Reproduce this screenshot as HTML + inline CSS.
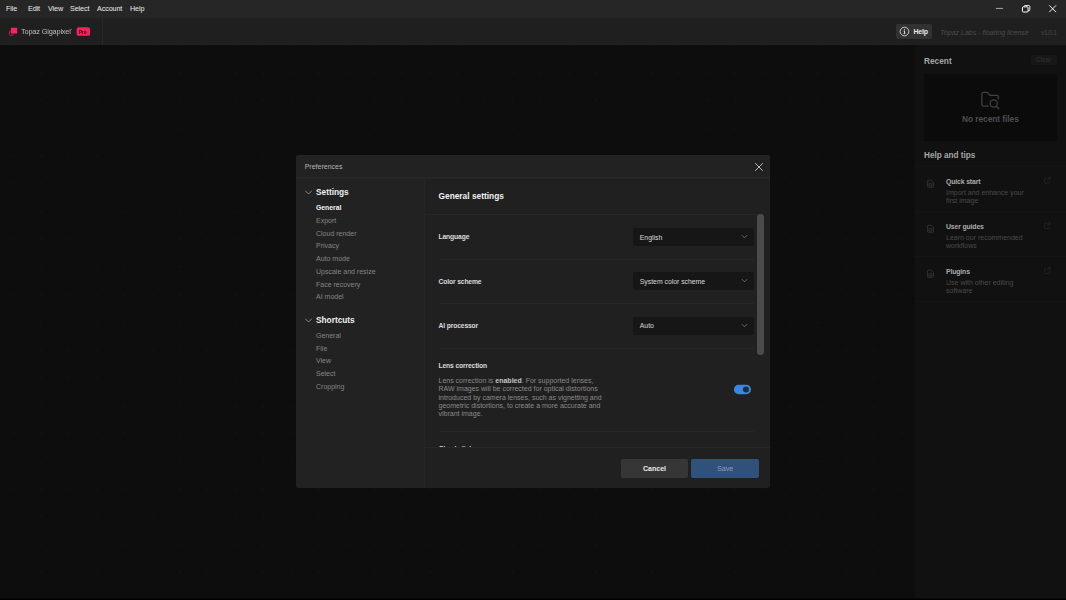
<!DOCTYPE html>
<html lang="en">
<head>
<meta charset="utf-8">
<title>Topaz Gigapixel - Preferences</title>
<style>
*{box-sizing:border-box;margin:0;padding:0}
html,body{width:1066px;height:600px;overflow:hidden;background:#0d0d0d}
body{font-family:"Liberation Sans",sans-serif;color:#e6e6e6;position:relative;font-size:7px}
.t{position:absolute;white-space:nowrap;line-height:10px;height:10px}
.b{font-weight:bold}
#menubar{position:absolute;left:0;top:0;width:1066px;height:18px;background:#262626}
#menubar .t{top:3.5px;font-size:7.2px;letter-spacing:-0.1px;color:#ededed}
#toolbar{position:absolute;left:0;top:18px;width:1066px;height:27px;background:#1f1f1f}
#toolbar .sep{position:absolute;left:102px;top:0;width:1px;height:27px;background:#272727}
#helpbtn{position:absolute;left:896px;top:6px;width:36px;height:15px;background:#323232;border-radius:2px}
#main{position:absolute;left:0;top:45px;width:915px;height:555px;background-color:#0d0d0d;background-image:radial-gradient(circle at center,#161616 0.3px,rgba(22,22,22,0) 0.95px);background-size:27.76px 27.76px;background-position:27.34px 13.96px}
#bbar{position:absolute;left:0;top:598px;width:1066px;height:2px;background:linear-gradient(rgba(0,0,0,0.45) 0,rgba(0,0,0,0.45) 1px,#000 1px,#000 2px);z-index:5}
#rpanel{position:absolute;left:915px;top:45px;width:151px;height:555px;background:#111111}
#rcard{position:absolute;left:9px;top:29px;width:133px;height:67px;background:#0b0b0b;border-radius:1px}
#clear{position:absolute;left:116px;top:9.5px;width:26px;height:10.5px;background:#171717;border-radius:1.5px}
.item{position:absolute;left:0;width:151px;height:45px;border-top:1px solid #141414}
.item .ttl{left:31px;top:10px;font-size:6.9px;letter-spacing:-0.15px;font-weight:bold;color:#acacac}
.item .d1{left:31px;top:20.5px;font-size:7px;color:#4a4a4a}
.item .d2{left:31px;top:28.8px;font-size:7px;color:#4a4a4a}
#dialog{position:absolute;left:296px;top:155px;width:474px;height:333px;background:#202020;border-radius:3px;overflow:hidden}
#dhead{position:absolute;left:0;top:0;width:474px;height:24px;background:linear-gradient(#222222 0,#222222 22px,#262626 22px,#272727 24px);z-index:2}
#side{position:absolute;left:0;top:23px;width:129px;height:310px;background:#222222;border-right:1px solid #252525}
#side .t{left:20px;font-size:7px;color:#868686}
#side .h{font-size:8.3px;font-weight:bold;color:#f0f0f0}
#content{position:absolute;left:129px;top:23px;width:345px;height:269px;overflow:hidden}
.lbl{left:13.5px;font-size:6.75px;letter-spacing:-0.14px;font-weight:bold;color:#dcdcdc}
.hr{position:absolute;left:13.5px;width:315px;height:1px;background:#272727}
.sel{position:absolute;left:208px;width:121px;height:18px;background:#161616;border-radius:2px}
.sel .t{left:6.8px;top:4.5px;font-size:6.9px;letter-spacing:-0.03px;color:#dadada}
.sel svg{position:absolute;left:108px;top:6px}
#foot{position:absolute;left:129px;top:292px;width:345px;height:41px;border-top:1px solid #272727;background:#202020}
.btn{position:absolute;top:11px;height:19px;border-radius:2px;text-align:center;font-size:7.2px;line-height:19px}
</style>
</head>
<body>
<div id="menubar">
<span class="t" style="left:6px">File</span>
<span class="t" style="left:28px">Edit</span>
<span class="t" style="left:48px">View</span>
<span class="t" style="left:70px">Select</span>
<span class="t" style="left:97px">Account</span>
<span class="t" style="left:130px">Help</span>
<svg style="position:absolute;left:990px;top:0" width="76" height="18" viewBox="0 0 76 18" fill="none" stroke="#ffffff" stroke-width="1">
<path d="M5.9 8.4H13.1" stroke-width="0.7" stroke="#e0e0e0"/>
<rect x="32.45" y="6.85" width="5.6" height="5.15" rx="0.9" stroke-width="1"/>
<path d="M34.2 6.8V6.5Q34.2 5.5 35.2 5.5H38.8Q39.8 5.5 39.8 6.5V9.8Q39.8 10.8 38.8 10.8H38.1" stroke-width="0.9"/>
<path d="M59.3 5.4L66 12.1M66 5.4L59.3 12.1" stroke-width="0.95"/>
</svg>
</div>
<div id="toolbar">
<div class="sep"></div>
<svg style="position:absolute;left:7px;top:8px" width="12" height="11" viewBox="0 0 12 11">
<rect x="3.8" y="1.7" width="6.4" height="5.8" rx="0.5" fill="#fb2359"/>
<path d="M3.7 5.4H2.9Q2.4 5.4 2.4 5.9V8.6Q2.4 9.3 3.1 9.3H5.3Q6 9.3 6 8.6V7.6" fill="none" stroke="#d81f50" stroke-width="0.8"/>
</svg>
<span class="t" style="left:20.9px;top:9px;font-size:7.4px;color:#bebebe;letter-spacing:-0.19px;will-change:transform">Topaz Gigapixel<span style="font-size:4px;vertical-align:top;position:relative;top:-1px">"</span></span>
<svg style="position:absolute;left:75px;top:8px" width="17" height="12" viewBox="0 0 17 12"><rect x="1.6" y="1.25" width="13.45" height="8.6" rx="1.9" fill="#f6235b"/></svg>
<span class="t b" style="left:79.2px;top:9.6px;font-size:4.7px;letter-spacing:-0.1px;will-change:transform;color:#2a0611">Pro</span>
<div id="helpbtn">
<svg style="position:absolute;left:3px;top:2px" width="12" height="12" viewBox="0 0 12 12"><circle cx="5.5" cy="5.5" r="4.3" fill="none" stroke="#e4e4e4" stroke-width="0.85"/><rect x="5" y="3.2" width="1" height="1" fill="#e4e4e4"/><rect x="5.05" y="4.8" width="0.95" height="2.9" fill="#e4e4e4"/><rect x="4.5" y="4.8" width="1" height="0.6" fill="#e4e4e4"/><rect x="4.4" y="7.2" width="2.2" height="0.6" fill="#e4e4e4"/></svg>
<span class="t b" style="left:17.5px;top:2.5px;font-size:7px;color:#e8e8e8;letter-spacing:-0.2px">Help</span>
</div>
<span class="t" style="left:940.3px;top:9.5px;font-size:7px;font-style:italic;color:#4c4c4c">Topaz Labs - floating license</span>
<span class="t" style="left:1041px;top:9.5px;font-size:6.6px;letter-spacing:-0.4px;color:#484848">v1.0.1</span>
</div>

<div id="main"></div>
<div id="bbar"></div>
<div id="rpanel">
<span class="t b" style="left:9px;top:10.5px;font-size:8.3px;color:#a6a6a6">Recent</span>
<div id="clear"><span class="t b" style="left:4.7px;top:0.5px;font-size:6.5px;letter-spacing:-0.1px;color:#2b2b2b">Clear</span></div>
<div id="rcard">
<svg style="position:absolute;left:56px;top:16px" width="21" height="21" viewBox="0 -0.4 21 21" fill="none" stroke="#424242" stroke-width="1.25" stroke-linecap="round" stroke-linejoin="round">
<path d="M8.3 15.6H3.1Q1.9 15.6 1.9 14.4V3.1Q1.9 1.9 3.1 1.9H6.9Q7.6 1.9 8 2.5L9.4 4.4Q9.8 5 10.5 5H17.1Q18.3 5 18.3 6.2V8.6"/>
<circle cx="13.7" cy="13.1" r="3.6"/>
<path d="M16.4 15.8L18.9 18.3"/>
</svg>
<span class="t b" style="left:38px;top:40px;font-size:8.3px;letter-spacing:-0.03px;color:#4f4f4f">No recent files</span>
</div>
<span class="t b" style="left:9px;top:105.6px;font-size:8.2px;color:#a6a6a6">Help and tips</span>
<div class="item" style="top:121px">
<svg class="doc" style="position:absolute;left:12px;top:12px" width="8" height="10" viewBox="0 0 8 10" fill="none" stroke="#3a3a3a" stroke-width="0.8"><path d="M0.6 2Q0.6 1.2 1.4 1.2H4.3L6.4 3.3V7.5Q6.4 8.3 5.6 8.3H1.4Q0.6 8.3 0.6 7.5Z"/><path d="M1.9 4.6H5.1V7H1.9Z" stroke-width="0.6"/><path d="M2 6.8L3.2 5.6L4 6.4L5 6.9" stroke-width="0.5"/></svg>
<span class="t ttl">Quick start</span><span class="t d1">Import and enhance your</span><span class="t d2">first image</span>
<svg style="position:absolute;left:128px;top:9px" width="9" height="9" viewBox="0 0 9 9" fill="none" stroke="#272727" stroke-width="0.8"><path d="M3.8 2.4H2.4Q1.6 2.4 1.6 3.2V6.6Q1.6 7.4 2.4 7.4H5.8Q6.6 7.4 6.6 6.6V5.2"/><path d="M5 1.6H7.3V3.9M7.3 1.6L4.2 4.7"/></svg>
</div>
<div class="item" style="top:166px">
<svg class="doc" style="position:absolute;left:12px;top:12px" width="8" height="10" viewBox="0 0 8 10" fill="none" stroke="#3a3a3a" stroke-width="0.8"><path d="M0.6 2Q0.6 1.2 1.4 1.2H4.3L6.4 3.3V7.5Q6.4 8.3 5.6 8.3H1.4Q0.6 8.3 0.6 7.5Z"/><path d="M1.9 4.6H5.1V7H1.9Z" stroke-width="0.6"/><path d="M2 6.8L3.2 5.6L4 6.4L5 6.9" stroke-width="0.5"/></svg>
<span class="t ttl">User guides</span><span class="t d1">Learn our recommended</span><span class="t d2">workflows</span>
<svg style="position:absolute;left:128px;top:9px" width="9" height="9" viewBox="0 0 9 9" fill="none" stroke="#272727" stroke-width="0.8"><path d="M3.8 2.4H2.4Q1.6 2.4 1.6 3.2V6.6Q1.6 7.4 2.4 7.4H5.8Q6.6 7.4 6.6 6.6V5.2"/><path d="M5 1.6H7.3V3.9M7.3 1.6L4.2 4.7"/></svg>
</div>
<div class="item" style="top:211px">
<svg class="doc" style="position:absolute;left:12px;top:12px" width="8" height="10" viewBox="0 0 8 10" fill="none" stroke="#3a3a3a" stroke-width="0.8"><path d="M0.6 2Q0.6 1.2 1.4 1.2H4.3L6.4 3.3V7.5Q6.4 8.3 5.6 8.3H1.4Q0.6 8.3 0.6 7.5Z"/><path d="M1.9 4.6H5.1V7H1.9Z" stroke-width="0.6"/><path d="M2 6.8L3.2 5.6L4 6.4L5 6.9" stroke-width="0.5"/></svg>
<span class="t ttl">Plugins</span><span class="t d1">Use with other editing</span><span class="t d2">software</span>
<svg style="position:absolute;left:128px;top:9px" width="9" height="9" viewBox="0 0 9 9" fill="none" stroke="#272727" stroke-width="0.8"><path d="M3.8 2.4H2.4Q1.6 2.4 1.6 3.2V6.6Q1.6 7.4 2.4 7.4H5.8Q6.6 7.4 6.6 6.6V5.2"/><path d="M5 1.6H7.3V3.9M7.3 1.6L4.2 4.7"/></svg>
</div>
<div class="item" style="top:256px;height:1px"></div>
</div>

<div id="dialog">
<div id="dhead">
<span class="t" style="left:8.7px;top:6.5px;font-size:7px;color:#b4b4b4">Preferences</span>
<svg style="position:absolute;left:458px;top:7px" width="10" height="10" viewBox="0 0 10 10" stroke="#c4c4c4" stroke-width="0.95" fill="none"><path d="M1.2 1.2L8.8 8.8M8.8 1.2L1.2 8.8"/></svg>
</div>
<div id="side">
<svg style="position:absolute;left:9px;top:11.5px" width="7" height="5" viewBox="0 0 7 5" fill="none" stroke="#a6a6a6" stroke-width="0.8"><path d="M0.1 0.6L3.5 4L6.9 0.6"/></svg>
<span class="t h" style="left:20px;top:9px">Settings</span>
<span class="t b" style="top:25px;font-size:6.8px;color:#f4f4f4">General</span>
<span class="t" style="top:38px">Export</span>
<span class="t" style="top:51px">Cloud render</span>
<span class="t" style="top:63px">Privacy</span>
<span class="t" style="top:76px">Auto mode</span>
<span class="t" style="top:89px">Upscale and resize</span>
<span class="t" style="top:102px">Face recovery</span>
<span class="t" style="top:114px">AI model</span>
<svg style="position:absolute;left:9px;top:139.5px" width="7" height="5" viewBox="0 0 7 5" fill="none" stroke="#a6a6a6" stroke-width="0.8"><path d="M0.1 0.6L3.5 4L6.9 0.6"/></svg>
<span class="t h" style="left:20px;top:137px">Shortcuts</span>
<span class="t" style="top:153px">General</span>
<span class="t" style="top:166px">File</span>
<span class="t" style="top:178px">View</span>
<span class="t" style="top:191px">Select</span>
<span class="t" style="top:204px">Cropping</span>
</div>
<div id="content">
<span class="t b" style="left:13.5px;top:12.8px;font-size:8.35px;color:#f0f0f0">General settings</span>
<div class="hr" style="left:0;width:332px;top:36px"></div>
<span class="t lbl" style="top:53.6px">Language</span>
<div class="sel" style="top:50px"><span class="t">English</span><svg width="7" height="5" viewBox="0 0 7 5" fill="none" stroke="#7c7c7c" stroke-width="0.8"><path d="M0.8 1.1L3.5 3.8L6.2 1.1"/></svg></div>
<div class="hr" style="top:81px"></div>
<span class="t lbl" style="top:98.5px">Color scheme</span>
<div class="sel" style="top:94.3px"><span class="t">System color scheme</span><svg width="7" height="5" viewBox="0 0 7 5" fill="none" stroke="#7c7c7c" stroke-width="0.8"><path d="M0.8 1.1L3.5 3.8L6.2 1.1"/></svg></div>
<div class="hr" style="top:125px"></div>
<span class="t lbl" style="top:142.7px">AI processor</span>
<div class="sel" style="top:138.7px"><span class="t">Auto</span><svg width="7" height="5" viewBox="0 0 7 5" fill="none" stroke="#7c7c7c" stroke-width="0.8"><path d="M0.8 1.1L3.5 3.8L6.2 1.1"/></svg></div>
<div class="hr" style="top:170px"></div>
<span class="t lbl" style="top:183.3px">Lens correction</span>
<div style="position:absolute;left:13.5px;top:199px;width:180px;font-size:7px;line-height:8.35px;color:#8a8a8a;white-space:nowrap">Lens correction is <b style="color:#c4c4c4">enabled</b>. For supported lenses,<br>RAW images will be corrected for optical distortions<br>introduced by camera lenses, such as vignetting and<br>geometric distortions, to create a more accurate and<br>vibrant image.</div>
<svg style="position:absolute;left:308px;top:206px" width="20" height="12" viewBox="0 0 20 12"><rect x="0.9" y="0.85" width="17.1" height="9.3" rx="4.65" fill="#3888e8"/><circle cx="13" cy="5.45" r="3.05" fill="#212c3c"/></svg>
<div class="hr" style="top:253px"></div>
<span class="t lbl" style="top:265.5px">Check disk space</span>
<div style="position:absolute;left:332.3px;top:36.3px;width:6.7px;height:140.5px;border-radius:3.3px;background:#4b4b4b"></div>
</div>
<div id="foot">
<div class="btn b" style="left:196px;width:67px;background:#363636;color:#ececec;font-size:7px">Cancel</div>
<div class="btn" style="left:266.3px;width:67.7px;background:#2f517c;color:#8c9db5">Save</div>
</div>
</div>
</body>
</html>
